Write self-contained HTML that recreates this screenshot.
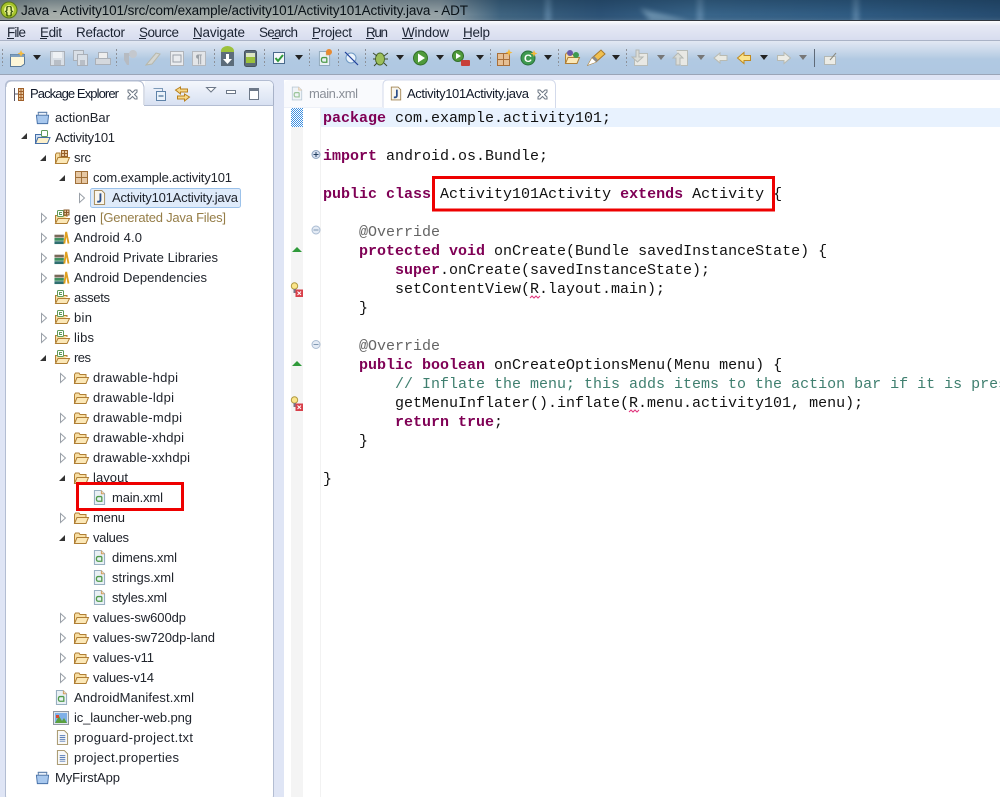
<!DOCTYPE html>
<html><head><meta charset="utf-8"><style>
html,body{margin:0;padding:0;width:1000px;height:797px;overflow:hidden;background:#fff}
svg{display:block}
.t{font:13px "Liberation Sans",sans-serif;fill:#20242c}
.m{font:13.5px "Liberation Sans",sans-serif;fill:#1c2433}
.c{font:15px "Liberation Mono",monospace;fill:#111;white-space:pre}
.k{font-weight:bold;fill:#7f0055}
</style></head><body>
<svg width="1000" height="797" viewBox="0 0 1000 797" xmlns="http://www.w3.org/2000/svg" font-family="Liberation Sans">
<defs>
<linearGradient id="tb" x1="0" x2="1" y1="0" y2="0"><stop offset="0" stop-color="#8a9490"/><stop offset=".05" stop-color="#a9b0ac"/><stop offset=".3" stop-color="#a4aca9"/><stop offset=".44" stop-color="#98a4a8"/><stop offset=".5" stop-color="#3f6480"/><stop offset=".6" stop-color="#2c5276"/><stop offset=".7" stop-color="#39658a"/><stop offset=".85" stop-color="#2f5b82"/><stop offset="1" stop-color="#264c70"/></linearGradient>
<linearGradient id="tbv" x1="0" x2="0" y1="0" y2="1"><stop offset="0" stop-color="#102a40" stop-opacity=".35"/><stop offset=".7" stop-color="#102a40" stop-opacity="0"/><stop offset="1" stop-color="#fff" stop-opacity=".12"/></linearGradient>
<linearGradient id="mb" x1="0" x2="0" y1="0" y2="1"><stop offset="0" stop-color="#fbfcfe"/><stop offset=".25" stop-color="#e6e9f5"/><stop offset="1" stop-color="#d8ddef"/></linearGradient>
<linearGradient id="tl" x1="0" x2="0" y1="0" y2="1"><stop offset="0" stop-color="#e2e8f3"/><stop offset=".35" stop-color="#c4d5e8"/><stop offset=".55" stop-color="#b1c9e2"/><stop offset="1" stop-color="#afc8e1"/></linearGradient>
<linearGradient id="ph" x1="0" x2="0" y1="0" y2="1"><stop offset="0" stop-color="#f4f7fc"/><stop offset="1" stop-color="#d8e1f2"/></linearGradient>
<filter id="bl" x="-50%" y="-50%" width="200%" height="200%"><feGaussianBlur stdDeviation="2.500"/></filter>
<symbol id="fo" viewBox="0 0 16 16" overflow="visible"><path d="M1.500 13.500V4.500L2.500 3H6L7 4.500H13V7" fill="#f8dfa4" stroke="#b07f35"/><path d="M1.500 13.500L4 7.500H15.500L13 13.500Z" fill="#fbe8b8" stroke="#b07f35"/></symbol>
<symbol id="fa" viewBox="0 0 16 16" overflow="visible"><path d="M1.500 13.500V6.500H13V8" fill="#f8dfa4" stroke="#b07f35"/><path d="M1.500 14.500L4 9.500H15.500L13 14.500Z" fill="#fbe8b8" stroke="#b07f35"/><rect x="3.500" y="1.500" width="6" height="6" rx="1" fill="#fff" stroke="#5f9a5a"/><path d="M8 3.500H5.500V5.500H8" fill="none" stroke="#5f9a5a"/></symbol>
<symbol id="fp" viewBox="0 0 16 16" overflow="visible"><path d="M1.500 13.500V4.500L2.500 3H6V7H13" fill="#f8dfa4" stroke="#b07f35"/><path d="M1.500 13.500L4 7.500H15.500L13 13.500Z" fill="#fbe8b8" stroke="#b07f35"/><path d="M7.500 .5H13.500V6.500H7.500ZM10.500 .5V6.500M7.500 3.500H13.500" fill="#e8c9a0" stroke="#96602a"/></symbol>
<symbol id="x" viewBox="0 0 14 16" overflow="visible"><path d="M1.500 .5H9L12.500 4V15.500H1.500Z" fill="#e9f0f5" stroke="#8aa4b8"/><path d="M9 .5V4H12.500" fill="#f7d9b0" stroke="#c99a60"/><path d="M9.500 7H5.500Q3.700 7 3.700 9.500T5.500 12H9.500V7" fill="none" stroke="#4f9a4a" stroke-width="1.400"/></symbol>
<symbol id="j" viewBox="0 0 14 16" overflow="visible"><path d="M1.500 .5H9.500L12.500 3.500V15.500H1.500Z" fill="#f9f6ee" stroke="#a08350"/><path d="M8 3.500V10.500Q8 12.500 6 12.500H4.500" fill="none" stroke="#2c4f8a" stroke-width="2"/></symbol>
<symbol id="lib" viewBox="0 0 16 16" overflow="visible"><rect x=".5" y="5" width="10" height="3" fill="#7a6a5a"/><rect x=".5" y="8.500" width="10" height="3" fill="#3f8f5f"/><rect x=".5" y="12" width="10" height="3" fill="#2f6f6f"/><path d="M11 14.500L13 2L15.500 14.500" fill="none" stroke="#e0a020" stroke-width="2"/></symbol>
<symbol id="pr" viewBox="0 0 16 16" overflow="visible"><path d="M3 2.500H13M1.500 5.500H14.500L13.500 14.500H2.500Z" fill="#a8c8ee" stroke="#4670a8"/><path d="M3.500 2.500H12.500V5.500H3.500Z" fill="#e8f0fa" stroke="#5a7ca8"/></symbol>
<symbol id="tx" viewBox="0 0 14 16" overflow="visible"><path d="M1.500 .5H9L12.500 4V15.500H1.500Z" fill="#f8f8f8" stroke="#a08f60"/><path d="M4 6H10M4 8H10M4 10H10M4 12H10" stroke="#5c7fb8"/></symbol>
<symbol id="dn" viewBox="0 0 8 5"><path d="M0 0H8L4 5Z" fill="#222"/></symbol>
<symbol id="dg" viewBox="0 0 8 5"><path d="M0 0H8L4 5Z" fill="#777"/></symbol>
<symbol id="er" viewBox="0 0 12 16" overflow="visible"><circle cx="3.500" cy="4" r="3.200" fill="#fbe58a" stroke="#b09a40"/><rect x="2.500" y="7" width="2.500" height="4" fill="#778"/><rect x="4.500" y="7.500" width="7.500" height="7.500" fill="#d8404a"/><path d="M6.500 9.500L10 13M10 9.500L6.500 13" stroke="#fff"/></symbol>
<symbol id="cl" viewBox="0 0 11 11"><path d="M1 1H3L5.500 3.500L8 1H10V3L7.500 5.500L10 8V10H8L5.500 7.500L3 10H1V8L3.500 5.500L1 3Z" fill="#fff" stroke="#6d7784"/></symbol>
</defs>

<!-- title bar -->
<rect width="1000" height="21" fill="url(#tb)"/>
<g filter="url(#bl)" opacity=".5"><rect x="545" y="-4" width="6" height="28" fill="#7ea4c4"/><rect x="697" y="-4" width="6" height="28" fill="#7ea4c4"/><rect x="853" y="-4" width="6" height="28" fill="#7ea4c4"/><path d="M640 8L690 21H650Z" fill="#9abdd4"/></g>
<rect width="1000" height="21" fill="url(#tbv)"/>
<rect y="20" width="1000" height="1" fill="#30363e"/>
<circle cx="9" cy="10" r="8" fill="#a7c52a" stroke="#58741a"/><circle cx="9" cy="10" r="5" fill="#e9f090"/><text x="9" y="14" text-anchor="middle" font-size="11" font-weight="bold" fill="#3b5a10">{}</text>
<text x="21" y="15" class="m" textLength="447" lengthAdjust="spacing" style="fill:#0a1218">Java - Activity101/src/com/example/activity101/Activity101Activity.java - ADT</text>

<!-- menu -->
<rect y="21" width="1000" height="19" fill="url(#mb)"/><rect y="40" width="1000" height="1" fill="#aab3c6"/>
<g class="m">
<text class="m" x="7" y="37" textLength="19">File</text><text class="m" x="40" y="37" textLength="22">Edit</text><text class="m" x="76" y="37" textLength="49">Refactor</text><text class="m" x="139" y="37" textLength="40">Source</text><text class="m" x="193" y="37" textLength="52">Navigate</text><text class="m" x="259" y="37" textLength="39">Search</text><text class="m" x="312" y="37" textLength="40">Project</text><text class="m" x="366" y="37" textLength="22">Run</text><text class="m" x="402" y="37" textLength="47">Window</text><text class="m" x="463" y="37" textLength="27">Help</text>
</g>
<g fill="#1c2433"><rect x="7" y="38" width="7" height="1"/><rect x="40" y="38" width="7" height="1"/><rect x="139" y="38" width="7" height="1"/><rect x="193" y="38" width="8" height="1"/><rect x="272" y="38" width="7" height="1"/><rect x="312" y="38" width="7" height="1"/><rect x="366" y="38" width="8" height="1"/><rect x="402" y="38" width="11" height="1"/><rect x="463" y="38" width="8" height="1"/></g>

<!-- toolbar -->
<rect y="41" width="1000" height="33" fill="url(#tl)"/><rect y="74" width="1000" height="1" fill="#9aa5b7"/>
<g fill="#8c9098"><path id="gr" d="M2 49h1v2H2zM2 53h1v2H2zM2 57h1v2H2zM2 61h1v2H2zM2 65h1v1H2z"/>
<use href="#gr" x="114"/><use href="#gr" x="212"/><use href="#gr" x="262"/><use href="#gr" x="307"/><use href="#gr" x="336"/><use href="#gr" x="363"/><use href="#gr" x="488"/><use href="#gr" x="556"/><use href="#gr" x="624"/></g>
<rect x="814" y="49" width="1" height="18" fill="#5f6a78"/>
<!-- tb icons -->
<path d="M10.500 54.500H24.500V64L21 66.500H10.500Z" fill="#fdf6d8" stroke="#5b7a9a"/><path d="M10.500 54.500H24.500V57H10.500Z" fill="#7fa0c0"/><path d="M21 50L22 52.500L24.500 53.500L22 54.500L21 57L20 54.500L17.500 53.500L20 52.500Z" fill="#f4b93c"/>
<use href="#dn" x="33" y="55" width="8" height="5"/>
<path d="M50.500 51.500H64.500V65.500H50.500Z" fill="#d9dfe6" stroke="#aab0b8"/><rect x="53" y="52" width="9" height="6" fill="#eef1f4"/><rect x="54" y="60" width="7" height="5" fill="#b8bec6"/>
<path d="M73.500 50.500H83.500V60.500H73.500Z" fill="#d9dfe6" stroke="#aab0b8"/><path d="M77.500 54.500H87.500V65.500H77.500Z" fill="#d9dfe6" stroke="#aab0b8"/><rect x="80" y="60" width="5" height="5" fill="#b8bec6"/>
<path d="M98.500 52.500H107.500V58.500H98.500Z" fill="#eee" stroke="#aab0b8"/><path d="M95.500 58.500H110.500V64.500H95.500Z" fill="#d4d8dd" stroke="#aab0b8"/>
<path d="M124 53H131V56H129V65H127L124 60Z" fill="#b6bbc2"/><circle cx="133" cy="54" r="4" fill="#c4c8ce"/>
<path d="M146 65L156 53L160 54L152 64Z" fill="#d4d6d2" stroke="#b8b8aa"/>
<path d="M170.500 51.500H183.500V65.500H170.500Z" fill="#eaecef" stroke="#b0b4ba"/><path d="M173 55H181V62H173Z" fill="none" stroke="#9aa0a8"/>
<path d="M192.500 51.500H205.500V65.500H192.500Z" fill="#e3e5e8" stroke="#b4b8be"/><text x="199" y="63" text-anchor="middle" font-size="12" font-weight="bold" fill="#9aa0a6">¶</text>
<rect x="221" y="52" width="13" height="14" fill="#5c6c7a"/><path d="M221 51A6.500 5 0 0 1 234 51V52H221Z" fill="#9cc13c"/><path d="M226 54H229V59H232L227.500 64L223 59H226Z" fill="#fff"/>
<rect x="244.500" y="50.500" width="12" height="16" rx="2" fill="#5c6c78" stroke="#46525c"/><rect x="246" y="53" width="9" height="4" fill="#dce6c4"/><rect x="246" y="57" width="9" height="6" fill="#9cc13c"/>
<rect x="273.500" y="52.500" width="11" height="11" fill="#f4f7fa" stroke="#4a6a8c"/><path d="M275.500 58L278 61L283 55" fill="none" stroke="#2f9a3a" stroke-width="2"/>
<use href="#dn" x="295" y="55" width="8" height="5"/>
<use href="#x" x="318" y="51" width="13" height="15"/><circle cx="329" cy="52" r="3" fill="#e88a30"/>
<circle cx="351" cy="58" r="5" fill="#eaf3fb" stroke="#6f99c4"/><path d="M345 52L358 65" stroke="#1f3f9a" stroke-width="1.200"/>
<ellipse cx="380" cy="59" rx="4.500" ry="6" fill="#9cbf5a" stroke="#4c6a2a"/><path d="M373 53L377 56M388 53L384 56M373 59H376M385 59H388M374 66L377 63M387 66L384 63" stroke="#3c4a2a"/>
<use href="#dn" x="396" y="55" width="8" height="5"/>
<circle cx="420.500" cy="58" r="7" fill="#4f9a3a" stroke="#336f2a"/><path d="M418 53.500L425 58L418 62.500Z" fill="#fff"/>
<use href="#dn" x="436" y="55" width="8" height="5"/>
<circle cx="458" cy="56" r="5.500" fill="#4f9a3a" stroke="#336f2a"/><path d="M456 53L461 56L456 59Z" fill="#fff"/><rect x="461" y="60" width="9" height="6" rx="1" fill="#c8403a"/>
<use href="#dn" x="476" y="55" width="8" height="5"/>
<path d="M497.500 53.500H509.500V65.500H497.500ZM503.500 53.500V65.500M497.500 59.500H509.500" fill="#e5bf95" stroke="#a86f3a"/><path d="M509 49L510 51.500L512.500 52.500L510 53.500L509 56L508 53.500L505.500 52.500L508 51.500Z" fill="#f4b93c"/>
<circle cx="528" cy="58" r="7" fill="#3f9a50" stroke="#2a6f3a"/><text x="528" y="62" text-anchor="middle" font-size="11" font-weight="bold" fill="#fff">C</text><path d="M534 50L535 52.500L537.500 53.500L535 54.500L534 57L533 54.500L530.500 53.500L533 52.500Z" fill="#f4b93c"/>
<use href="#dn" x="544" y="55" width="8" height="5"/>
<use href="#fo" x="564" y="50" width="16" height="16"/><circle cx="570" cy="53" r="3" fill="#6a5aa8"/><circle cx="576" cy="55" r="3" fill="#3f9a50"/>
<path d="M588 65L592 58L601 50L605 54L596 62Z" fill="#f0c050" stroke="#a8782a"/><path d="M588 65L592 58L596 62Z" fill="#fff"/><path d="M593 57L597 61" stroke="#8a8a8a" stroke-width="3"/>
<use href="#dn" x="612" y="55" width="8" height="5"/>
<path d="M637.500 53.500H647.500V65.500H634.500V58" fill="#e8e8e4" stroke="#b8bcb8"/><path d="M636 50V57H632L637.500 62L643 57H639V50Z" fill="#dbddd8" stroke="#b4b8b4"/>
<use href="#dg" x="657" y="55" width="8" height="5"/>
<path d="M676.500 50.500H687.500V65.500H681" fill="#e8e8e4" stroke="#b8bcb8"/><path d="M676 65V58H673L678 53L683 58H680V65Z" fill="#dbddd8" stroke="#b4b8b4"/>
<use href="#dg" x="697" y="55" width="8" height="5"/>
<path d="M714 58L720 53V55.500H727V60.500H720V63Z" fill="#e9e9e2" stroke="#b8bab2"/>
<path d="M737.500 58L744 52.500V55.500H750.500V60.500H744V63.500Z" fill="#fbe38a" stroke="#c08a20"/>
<use href="#dn" x="760" y="55" width="8" height="5"/>
<path d="M790.500 58L784 52.500V55.500H777.500V60.500H784V63.500Z" fill="#ecece6" stroke="#b8bab2"/>
<use href="#dg" x="799" y="55" width="8" height="5"/>
<rect x="824.500" y="56.500" width="11" height="8" fill="#ecece6" stroke="#b4b8b4"/><path d="M830 60L836 53" stroke="#8a8a80"/>

<!-- body -->
<rect y="75" width="1000" height="722" fill="#dfe5f5"/>
<rect x="5.500" y="80.500" width="268" height="720" rx="5" fill="#fff" stroke="#b3bdd2"/>
<path d="M144 105.500V86Q144 81 139 81H11Q6 81 6 86V105" fill="#fff"/>
<path d="M145 81H268Q273 81 273 86V105H145Z" fill="url(#ph)"/>
<path d="M144 105.500H273" stroke="#b3bdd2"/>
<path d="M6 87Q6 81 12 81H138Q143 81 144 87V105" fill="none" stroke="#b3bdd2"/>
<path d="M273.500 86V105" stroke="#a8b2c8"/>
<path d="M14.500 88V101M15 94H19" stroke="#556" stroke-width="1" fill="none"/><path d="M18.500 88.500H23.500V100.500H18.500ZM18.500 91.500H23.500M18.500 94.500H23.500M18.500 97.500H23.500M21 88V101" fill="#e8c9a0" stroke="#a0602a"/>
<text class="t" x="30" y="98" textLength="89" style="fill:#101828">Package Explorer</text>
<use href="#cl" x="127" y="89" width="11" height="11"/>
<path d="M153.500 88.500H162.500V91" fill="none" stroke="#7d9ab8"/><rect x="156.500" y="91.500" width="9" height="9" fill="#eaf2fa" stroke="#5e82a8"/><path d="M158.500 96H163.500" stroke="#23507e"/>
<path d="M176 89L181 86V88H188V91H181V93ZM190 96L185 93V95H178V98H185V100Z" fill="#f7d98a" stroke="#b8801c" transform="translate(-.5 1)"/>
<path d="M206.500 87.500H215.500L211 92Z" fill="#fff" stroke="#6d7888"/>
<rect x="226.500" y="90.500" width="9" height="3" fill="#fff" stroke="#6d7888"/>
<rect x="249.500" y="88.500" width="9" height="11" fill="#fff" stroke="#6d7888"/><rect x="250" y="89" width="8" height="2" fill="#6d7888"/>

<!-- editor -->
<rect x="284" y="80" width="716" height="717" fill="#fff"/>
<path d="M284 108V86Q284 80 290 80H380Q384 80 385 86V108" fill="#f9fafd"/>
<path d="M383 108V85Q383 80 388 80H550Q555 80 555.500 85V108" fill="#fff" stroke="#d3daeb"/>
<rect x="284" y="107" width="99" height="1" fill="#eef1f8"/>
<use href="#x" x="291" y="86" width="12" height="15" opacity=".55"/>
<text class="t" x="309" y="98" textLength="49" style="fill:#8a8f98">main.xml</text>
<use href="#j" x="390" y="86" width="12" height="15"/>
<text class="t" x="407" y="98" textLength="122" style="fill:#101828">Activity101Activity.java</text>
<use href="#cl" x="537" y="89" width="11" height="11"/>

<rect x="291" y="108" width="12" height="689" fill="#f4f4f4"/>
<rect x="320" y="108" width="1" height="689" fill="#f2f2f2"/>
<rect x="321" y="108" width="679" height="19" fill="#e8f2fe"/>
<defs><pattern id="h" width="2" height="2" patternUnits="userSpaceOnUse"><rect width="2" height="2" fill="#fff"/><rect width="1" height="1" fill="#3d8fe0"/><rect x="1" y="1" width="1" height="1" fill="#3d8fe0"/></pattern></defs>
<rect x="291" y="108" width="12" height="19" fill="url(#h)"/>
<circle cx="316" cy="154.500" r="4" fill="#d6dff0" stroke="#8ea4bf"/><path d="M313.500 154.500H318.500M316 152V157" stroke="#24405f"/>
<circle cx="316" cy="230" r="4" fill="#e4ebf5" stroke="#aabcd2"/><path d="M313.500 230H318.500" stroke="#8199b2"/>
<circle cx="316" cy="344.500" r="4" fill="#e4ebf5" stroke="#aabcd2"/><path d="M313.500 344.500H318.500" stroke="#8199b2"/>
<path d="M292 252H302L297 247Z" fill="#2f9a3a"/><path d="M292 366H302L297 361Z" fill="#2f9a3a"/>
<use href="#er" x="291" y="282" width="12" height="16"/><use href="#er" x="291" y="396" width="12" height="16"/>

<text class="c" y="122" x="323"><tspan class="k">package</tspan> com.example.activity101;</text>
<text class="c" y="160" x="323"><tspan class="k">import</tspan> android.os.Bundle;</text>
<text class="c" y="198" x="323"><tspan class="k">public</tspan> <tspan class="k">class</tspan> Activity101Activity <tspan class="k">extends</tspan> Activity {</text>
<text class="c" y="236" x="359" style="fill:#646464">@Override</text>
<text class="c" y="255" x="359"><tspan class="k">protected</tspan> <tspan class="k">void</tspan> onCreate(Bundle savedInstanceState) {</text>
<text class="c" y="274" x="395"><tspan class="k">super</tspan>.onCreate(savedInstanceState);</text>
<text class="c" y="293" x="395">setContentView(R.layout.main);</text>
<text class="c" y="312" x="359">}</text>
<text class="c" y="350" x="359" style="fill:#646464">@Override</text>
<text class="c" y="369" x="359"><tspan class="k">public</tspan> <tspan class="k">boolean</tspan> onCreateOptionsMenu(Menu menu) {</text>
<text class="c" y="388" x="395" style="fill:#3f7f6f">// Inflate the menu; this adds items to the action bar if it is present.</text>
<text class="c" y="407" x="395">getMenuInflater().inflate(R.menu.activity101, menu);</text>
<text class="c" y="426" x="395"><tspan class="k">return</tspan> <tspan class="k">true</tspan>;</text>
<text class="c" y="445" x="359">}</text>
<text class="c" y="483" x="323">}</text>
<path d="M530 298l2-2 2 2 2-2 2 2 2-2M629 412l2-2 2 2 2-2 2 2 2-2" fill="none" stroke="#e0307a"/>

<!-- tree -->
<rect x="90.500" y="188.500" width="150" height="19" rx="2" fill="#dfebfa" stroke="#9cc2ea"/>
<g id="arrows">
<path d="M21 139L27 133V139Z M40 161L46 155V161Z M59 181L65 175V181Z M40 361L46 355V361Z M59 481L65 475V481Z M59 541L65 535V541Z" fill="#333"/>
<g fill="#fff" stroke="#9aa0a8">
<path d="M79.500 193.500L84.500 198L79.500 202.500Z"/>
<path d="M41.500 213.500L46.500 218L41.500 222.500Z"/><path d="M41.500 233.500L46.500 238L41.500 242.500Z"/><path d="M41.500 253.500L46.500 258L41.500 262.500Z"/><path d="M41.500 273.500L46.500 278L41.500 282.500Z"/><path d="M41.500 313.500L46.500 318L41.500 322.500Z"/><path d="M41.500 333.500L46.500 338L41.500 342.500Z"/>
<path d="M60.500 373.500L65.500 378L60.500 382.500Z"/><path d="M60.500 413.500L65.500 418L60.500 422.500Z"/><path d="M60.500 433.500L65.500 438L60.500 442.500Z"/><path d="M60.500 453.500L65.500 458L60.500 462.500Z"/><path d="M60.500 513.500L65.500 518L60.500 522.500Z"/><path d="M60.500 613.500L65.500 618L60.500 622.500Z"/><path d="M60.500 633.500L65.500 638L60.500 642.500Z"/><path d="M60.500 653.500L65.500 658L60.500 662.500Z"/><path d="M60.500 673.500L65.500 678L60.500 682.500Z"/>
</g></g>
<use href="#pr" x="35" y="110" width="15" height="15"/>
<path d="M35.500 143.500V134.500H46V137" fill="#cfe0f5" stroke="#4670a8"/><path d="M35.500 143.500L38 137.500H50L47.500 143.500Z" fill="#fdf0cb" stroke="#4670a8"/><rect x="41.500" y="130.500" width="6" height="6" rx="1" fill="#fff" stroke="#5f9a5a"/>
<use href="#fp" x="54" y="150" width="16" height="16"/>
<path d="M75.500 171.500H87.500V183.500H75.500ZM81.500 171.500V183.500M75.500 177.500H87.500" fill="#e6c8a4" stroke="#a0703a"/>
<use href="#j" x="93" y="190" width="13" height="15"/>
<use href="#fa" x="54" y="209" width="16" height="16"/><path d="M64 210H69V215H64ZM66.500 210V215M64 212.500H69" fill="#e8c9a0" stroke="#8a5a2a"/>
<use href="#lib" x="54" y="230" width="15" height="15"/><use href="#lib" x="54" y="250" width="15" height="15"/><use href="#lib" x="54" y="270" width="15" height="15"/>
<use href="#fa" x="54" y="289" width="16" height="16"/><use href="#fa" x="54" y="309" width="16" height="16"/><use href="#fa" x="54" y="329" width="16" height="16"/><use href="#fa" x="54" y="349" width="16" height="16"/>
<use href="#fo" x="73" y="370" width="16" height="16"/><use href="#fo" x="73" y="390" width="16" height="16"/><use href="#fo" x="73" y="410" width="16" height="16"/><use href="#fo" x="73" y="430" width="16" height="16"/><use href="#fo" x="73" y="450" width="16" height="16"/><use href="#fo" x="73" y="470" width="16" height="16"/>
<use href="#x" x="93" y="490" width="13" height="15"/>
<use href="#fo" x="73" y="510" width="16" height="16"/><use href="#fo" x="73" y="530" width="16" height="16"/>
<use href="#x" x="93" y="550" width="13" height="15"/><use href="#x" x="93" y="570" width="13" height="15"/><use href="#x" x="93" y="590" width="13" height="15"/>
<use href="#fo" x="73" y="610" width="16" height="16"/><use href="#fo" x="73" y="630" width="16" height="16"/><use href="#fo" x="73" y="650" width="16" height="16"/><use href="#fo" x="73" y="670" width="16" height="16"/>
<use href="#x" x="55" y="690" width="13" height="15"/>
<rect x="53.500" y="711.500" width="15" height="13" fill="#dfe6ee" stroke="#8f96a0"/><rect x="55" y="713" width="12" height="10" fill="#7fb0e8"/><path d="M55 723L59 716L62 721L64 718L67 723Z" fill="#5aa040"/><rect x="56" y="715" width="3" height="3" fill="#d84a30"/>
<use href="#tx" x="56" y="730" width="13" height="15"/><use href="#tx" x="56" y="750" width="13" height="15"/>
<use href="#pr" x="35" y="770" width="15" height="15"/>

<g>
<text class="t" x="55" y="122" textLength="55">actionBar</text>
<text class="t" x="55" y="142" textLength="60">Activity101</text>
<text class="t" x="74" y="162" textLength="17">src</text>
<text class="t" x="93" y="182" textLength="139">com.example.activity101</text>
<text class="t" x="112" y="202" textLength="126">Activity101Activity.java</text>
<text class="t" x="74" y="222" textLength="22">gen</text>
<text class="t" x="100" y="222" textLength="126" style="fill:#957d47">[Generated Java Files]</text>
<text class="t" x="74" y="242" textLength="68">Android 4.0</text>
<text class="t" x="74" y="262" textLength="144">Android Private Libraries</text>
<text class="t" x="74" y="282" textLength="133">Android Dependencies</text>
<text class="t" x="74" y="302" textLength="36">assets</text>
<text class="t" x="74" y="322" textLength="18">bin</text>
<text class="t" x="74" y="342" textLength="20">libs</text>
<text class="t" x="74" y="362" textLength="17">res</text>
<text class="t" x="93" y="382" textLength="85">drawable-hdpi</text>
<text class="t" x="93" y="402" textLength="81">drawable-ldpi</text>
<text class="t" x="93" y="422" textLength="89">drawable-mdpi</text>
<text class="t" x="93" y="442" textLength="91">drawable-xhdpi</text>
<text class="t" x="93" y="462" textLength="97">drawable-xxhdpi</text>
<text class="t" x="93" y="482" textLength="35">layout</text>
<text class="t" x="112" y="502" textLength="51">main.xml</text>
<text class="t" x="93" y="522" textLength="32">menu</text>
<text class="t" x="93" y="542" textLength="36">values</text>
<text class="t" x="112" y="562" textLength="65">dimens.xml</text>
<text class="t" x="112" y="582" textLength="62">strings.xml</text>
<text class="t" x="112" y="602" textLength="55">styles.xml</text>
<text class="t" x="93" y="622" textLength="93">values-sw600dp</text>
<text class="t" x="93" y="642" textLength="122">values-sw720dp-land</text>
<text class="t" x="93" y="662" textLength="61">values-v11</text>
<text class="t" x="93" y="682" textLength="61">values-v14</text>
<text class="t" x="74" y="702" textLength="120">AndroidManifest.xml</text>
<text class="t" x="74" y="722" textLength="118">ic_launcher-web.png</text>
<text class="t" x="74" y="742" textLength="119">proguard-project.txt</text>
<text class="t" x="74" y="762" textLength="105">project.properties</text>
<text class="t" x="55" y="782" textLength="65">MyFirstApp</text>
</g>

<!-- red boxes -->
<rect x="77.500" y="483.500" width="105" height="26" fill="none" stroke="#ee0000" stroke-width="3"/>
<rect x="433.500" y="177.500" width="340" height="32.500" fill="none" stroke="#ee0000" stroke-width="3"/>
</svg>
</body></html>
